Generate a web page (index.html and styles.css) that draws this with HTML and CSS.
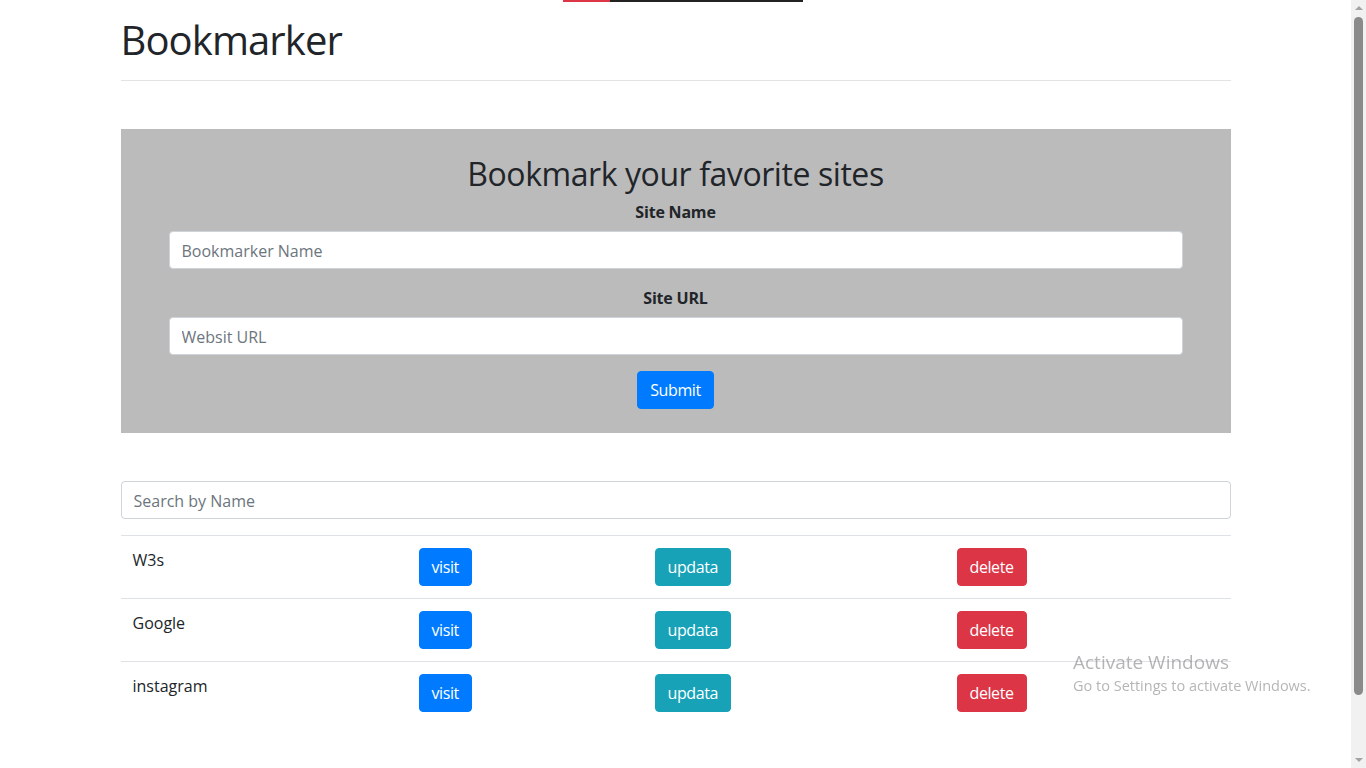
FILE: index.html
```html
<!DOCTYPE html>
<html lang="en">
<head>
<meta charset="utf-8">
<title>Bookmarker</title>
<link rel="stylesheet" href="styles.css">
</head>
<body>
<div class="topbar"><span class="topbar-red"></span><span class="topbar-dark"></span></div>
<div class="container">
  <header class="page-header">
    <h1>Bookmarker</h1>
  </header>

  <section class="jumbotron">
    <h2>Bookmark your favorite sites</h2>
    <form class="bm-form">
      <div class="form-group">
        <label for="siteName">Site Name</label>
        <input id="siteName" class="form-control" type="text" placeholder="Bookmarker Name">
      </div>
      <div class="form-group">
        <label for="siteUrl">Site URL</label>
        <input id="siteUrl" class="form-control" type="text" placeholder="Websit URL">
      </div>
      <button type="button" class="btn btn-primary">Submit</button>
    </form>
  </section>

  <input class="form-control search" type="text" placeholder="Search by Name">

  <table class="table">
    <colgroup>
      <col class="c-name"><col class="c-visit"><col class="c-update"><col class="c-delete">
    </colgroup>
    <tbody>
      <tr>
        <td>W3s</td>
        <td><button class="btn btn-primary">visit</button></td>
        <td><button class="btn btn-info">updata</button></td>
        <td><button class="btn btn-danger">delete</button></td>
      </tr>
      <tr>
        <td>Google</td>
        <td><button class="btn btn-primary">visit</button></td>
        <td><button class="btn btn-info">updata</button></td>
        <td><button class="btn btn-danger">delete</button></td>
      </tr>
      <tr>
        <td>instagram</td>
        <td><button class="btn btn-primary">visit</button></td>
        <td><button class="btn btn-info">updata</button></td>
        <td><button class="btn btn-danger">delete</button></td>
      </tr>
    </tbody>
  </table>
</div>

<div class="watermark">
  <div class="wm-title">Activate Windows</div>
  <div class="wm-sub">Go to Settings to activate Windows.</div>
</div>

<div class="scrollbar" aria-hidden="true">
  <span class="sb-arrow sb-up"></span>
  <span class="sb-track"><span class="sb-thumb"></span></span>
  <span class="sb-arrow sb-down"></span>
</div>
</body>
</html>
```

FILE: styles.css
```css
* { box-sizing: border-box; }

html { overflow: hidden; }

body {
  margin: 0 15px 0 0;
  font-family: "Open Sans", "Noto Sans", "DejaVu Sans", sans-serif;
  font-size: 16px;
  line-height: 1.5;
  color: #212529;
  background: #fff;
}

.topbar {
  position: absolute;
  top: 0;
  left: 563px;
  display: flex;
  height: 2px;
}
.topbar-red { width: 47px; background: #dc3545; }
.topbar-dark { width: 193px; background: #222; }

.container {
  max-width: 1140px;
  margin: 0 auto;
  padding: 0 15px;
}

.page-header {
  padding: 16px 0 16px;
  border-bottom: 1px solid #e3e3e3;
}
.page-header h1 {
  margin: 0;
  font-size: 40px;
  font-weight: 500;
  line-height: 48px;
  letter-spacing: -0.9px;
}

.jumbotron {
  margin-top: 48px;
  background: #bbbbbb;
  padding: 24px 48px;
  text-align: center;
}
.jumbotron h2 {
  margin: 0 0 6px;
  padding-top: 2px;
  font-size: 32px;
  font-weight: 500;
  line-height: 38px;
  letter-spacing: -0.43px;
}

.form-group { margin-bottom: 16px; }
.form-group label {
  display: block;
  font-weight: 700;
  padding-top: 1px;
  margin-bottom: 7px;
  letter-spacing: -0.2px;
}

.form-control {
  display: block;
  width: 100%;
  height: 38px;
  padding: 7px 12px 5px;
  font: inherit;
  font-size: 16px;
  line-height: 24px;
  color: #495057;
  background: #fff;
  border: 1px solid #ced4da;
  border-radius: 4px;
}
.form-control::placeholder { color: #6c757d; opacity: 1; }

.btn {
  display: inline-block;
  height: 38px;
  padding: 6px 12px;
  font: inherit;
  font-size: 16px;
  line-height: 24px;
  letter-spacing: -0.4px;
  color: #fff;
  border: 1px solid transparent;
  border-radius: 4px;
  cursor: pointer;
}
.btn-primary { background: #007bff; border-color: #007bff; }
.btn-info { background: #17a2b8; border-color: #17a2b8; }
.btn-danger { background: #dc3545; border-color: #dc3545; }

.search { margin-top: 48px; }

.table {
  width: 100%;
  margin-top: 16px;
  border-collapse: collapse;
  table-layout: fixed;
}
.c-name { width: 286px; }
.c-visit { width: 236px; }
.c-update { width: 302px; }
.c-delete { width: 286px; }
.table td {
  padding: 12px;
  vertical-align: top;
  border-top: 1px solid #dee2e6;
}

.watermark {
  position: fixed;
  left: 1073px;
  top: 648px;
  color: rgba(120, 120, 120, 0.55);
  pointer-events: none;
}
.wm-title { font-size: 19px; line-height: 28px; }
.wm-sub { font-size: 14.5px; line-height: 20px; }

.scrollbar {
  position: fixed;
  top: 0;
  right: 0;
  width: 15px;
  height: 100vh;
  background: #f1f1f1;
  display: flex;
  flex-direction: column;
  align-items: center;
}
.sb-arrow {
  width: 0;
  height: 0;
  border-left: 4px solid transparent;
  border-right: 4px solid transparent;
}
.sb-up {
  margin: 6px 0 5px;
  border-bottom: 4px solid #a3a3a3;
}
.sb-down {
  margin: 5px 0 6px;
  border-top: 4px solid #a3a3a3;
}
.sb-track {
  flex: 1;
  width: 100%;
  display: flex;
  justify-content: center;
}
.sb-thumb {
  width: 9px;
  height: 678px;
  margin-top: 2px;
  background: #8a8a8a;
  border-radius: 5px;
}
```
